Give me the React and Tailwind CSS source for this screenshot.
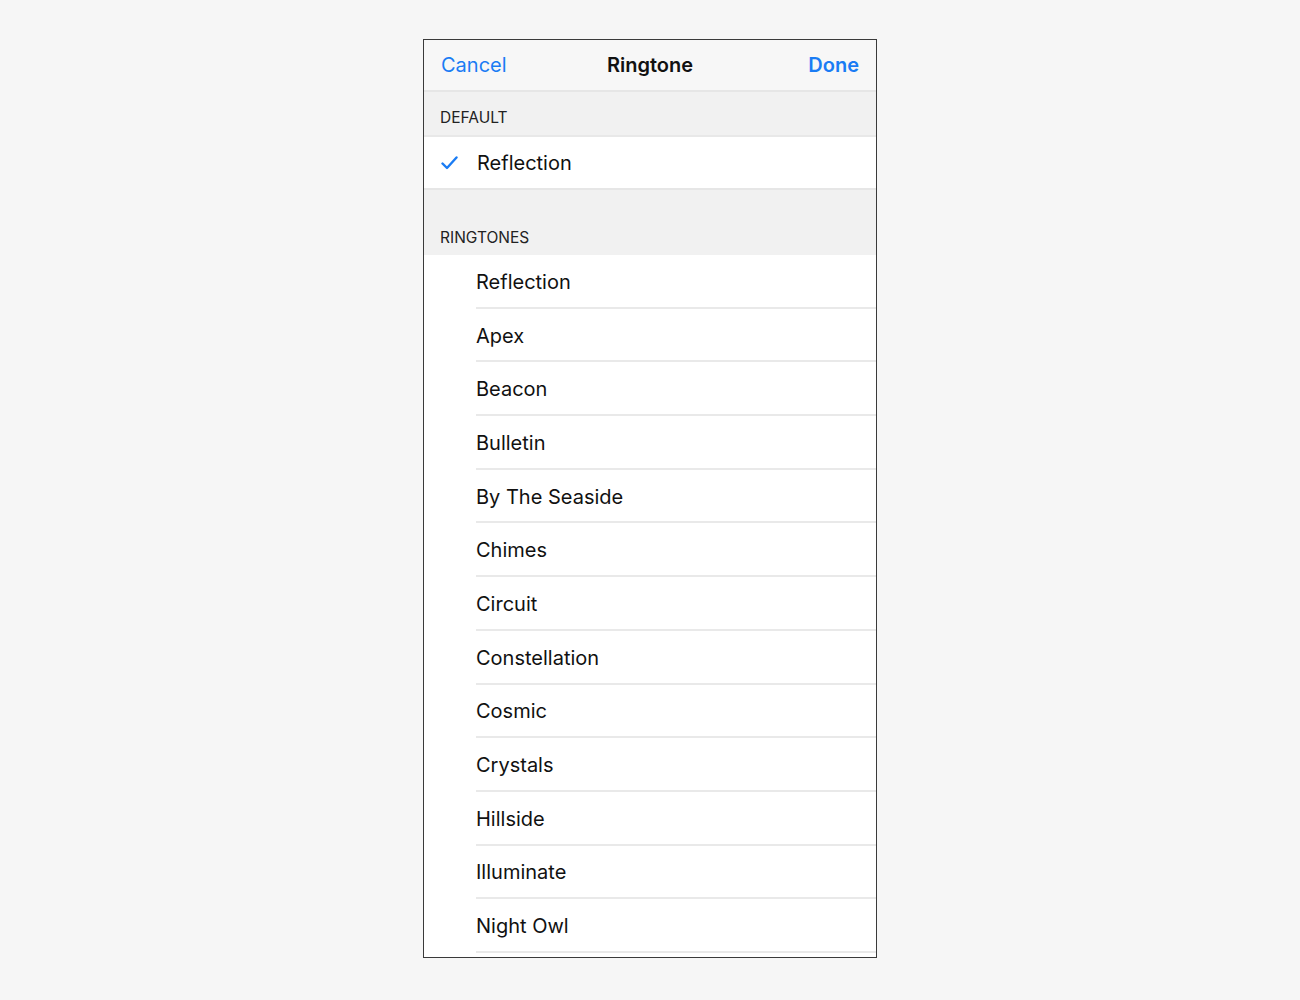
const ringtones = [
  'Reflection',
  'Apex',
  'Beacon',
  'Bulletin',
  'By The Seaside',
  'Chimes',
  'Circuit',
  'Constellation',
  'Cosmic',
  'Crystals',
  'Hillside',
  'Illuminate',
  'Night Owl',
];

function Check() {
  return (
    <svg width="17" height="14" viewBox="0 0 17 14" fill="none" className="shrink-0">
      <path d="M1.5 7.5 L6 12 L15.5 1.5" stroke="#1a7cf4" strokeWidth="2.4" strokeLinecap="round" strokeLinejoin="round" />
    </svg>
  );
}

export default function App() {
  return (
    <div className="min-h-screen bg-[#f6f6f6] flex justify-center pt-[39px]" style={{ fontFamily: 'Inter, "Noto Sans", sans-serif' }}>
      <div className="w-[454px] h-[919px] border border-[#3a3a3a] bg-white overflow-hidden flex flex-col">
        {/* Nav bar */}
        <div className="h-[52px] shrink-0 bg-[#f7f7f7] border-b-2 border-[#e6e6e6] grid grid-cols-3 items-center px-[17px] text-[20px]">
          <span className="text-[#1a7cf4]">Cancel</span>
          <span className="font-semibold text-[#111] text-center">Ringtone</span>
          <span className="font-semibold text-[#1a7cf4] text-right">Done</span>
        </div>

        {/* Default section */}
        <div className="h-[45px] shrink-0 bg-[#f1f1f1] border-b-2 border-[#e8e8e8] flex items-end pb-[6px] px-[16px] text-[15.5px] text-[#222]">
          DEFAULT
        </div>
        <div className="h-[53px] shrink-0 border-b-2 border-[#e6e6e6] flex items-center pl-[17px] gap-[19px] text-[20px] text-[#111]">
          <Check />
          <span className="pt-[1px]">Reflection</span>
        </div>

        {/* Ringtones section */}
        <div className="h-[65px] shrink-0 bg-[#f1f1f1] flex items-end pb-[6px] px-[16px] text-[15.5px] text-[#222]">
          RINGTONES
        </div>
        <div className="flex flex-col">
          {ringtones.map((name) => (
            <div key={name} className="pl-[52px]">
              <div className="h-[53.7px] border-b-2 border-[#e9e9e9] flex items-center pt-[2px] text-[20px] text-[#111]">
                {name}
              </div>
            </div>
          ))}
        </div>
      </div>
    </div>
  );
}
